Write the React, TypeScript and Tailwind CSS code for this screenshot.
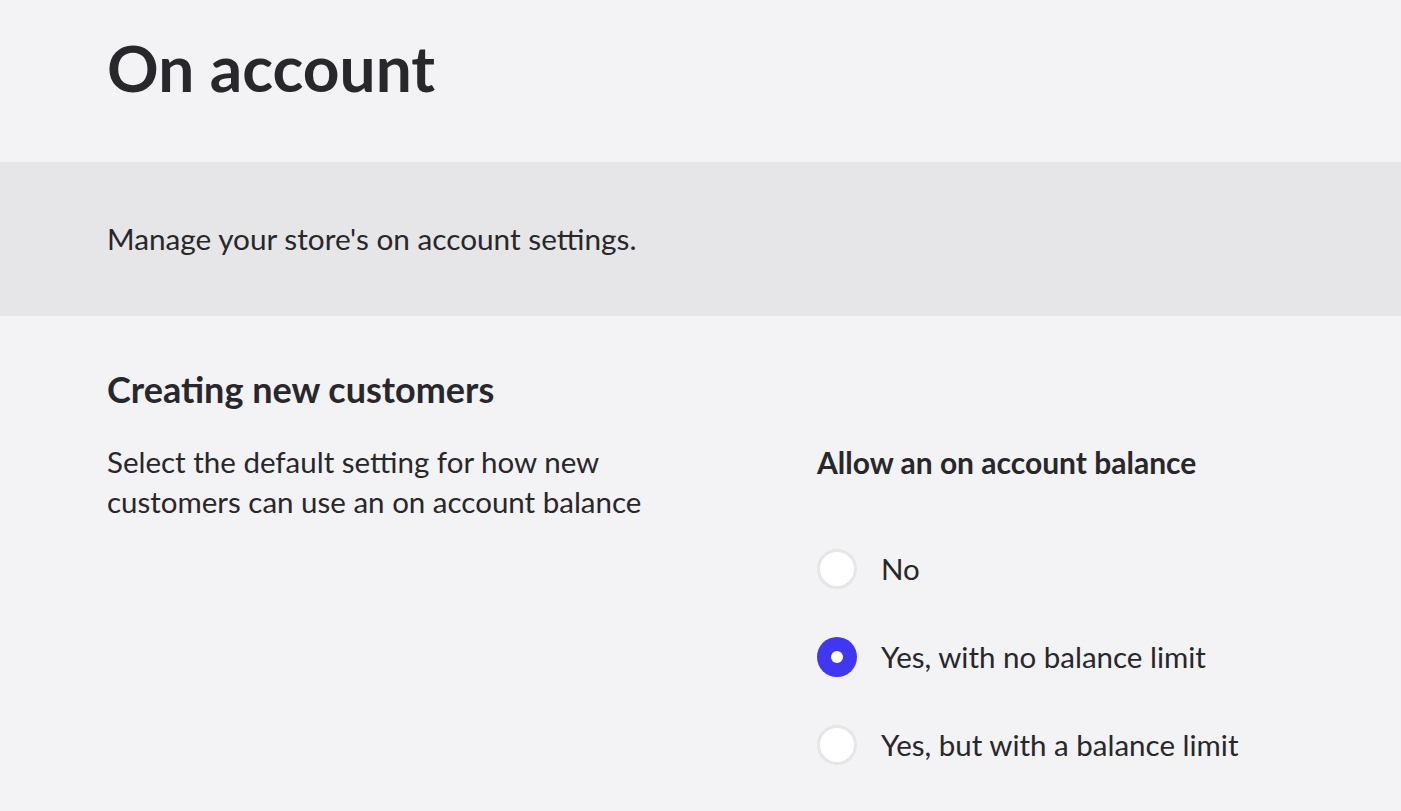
const options = [
  { label: "No", checked: false },
  { label: "Yes, with no balance limit", checked: true },
  { label: "Yes, but with a balance limit", checked: false },
];

function Radio({ checked }: { checked: boolean }) {
  if (checked) {
    return (
      <span className="flex h-10 w-10 shrink-0 items-center justify-center rounded-full bg-[#3f37f2]">
        <span className="h-3 w-3 rounded-full bg-white" />
      </span>
    );
  }
  return <span className="h-10 w-10 shrink-0 rounded-full border-[3px] border-[#e6e5e8] bg-white" />;
}

export default function App() {
  return (
    <div className="min-h-[811px] bg-[#f3f2f5] text-[#28272b] font-['Lato','Liberation_Sans',sans-serif]">
      <div className="h-[162px] px-[107px] pt-[28px]">
        <h1 className="text-[64px] font-bold leading-[80px]">On account</h1>
      </div>
      <div className="flex h-[154px] items-center bg-[#e6e5e8] px-[107px]">
        <p className="text-[29.75px] leading-[40px]">Manage your store's on account settings.</p>
      </div>
      <div className="px-[107px] pt-[49px]">
        <h2 className="text-[36px] font-bold leading-[48px]">Creating new customers</h2>
        <div className="mt-[29px] flex">
          <p className="w-[710px] pr-[150px] text-[29.5px] leading-[40px]">
            Select the default setting for how new customers can use an on account balance
          </p>
          <div>
            <h3 className="text-[30px] font-bold leading-[40px]">Allow an on account balance</h3>
            <div className="mt-[67px] flex flex-col gap-[48px]">
              {options.map((o) => (
                <label key={o.label} className="flex items-center gap-[24px]">
                  <Radio checked={o.checked} />
                  <span className="text-[29.5px] leading-[40px]">{o.label}</span>
                </label>
              ))}
            </div>
          </div>
        </div>
      </div>
    </div>
  );
}
